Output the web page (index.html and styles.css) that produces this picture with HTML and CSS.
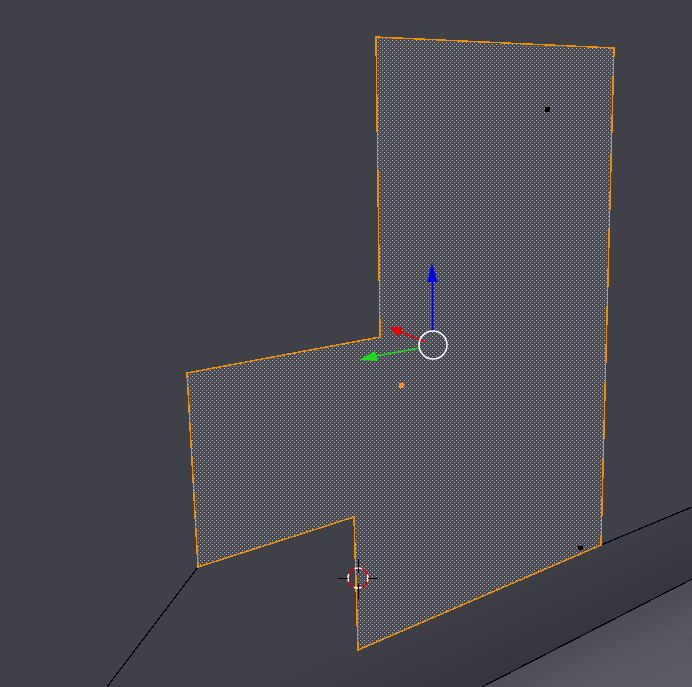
FILE: index.html
```html
<!DOCTYPE html>
<html lang="en">
<head>
<meta charset="utf-8">
<title>3D viewport</title>
<link rel="stylesheet" href="styles.css">
</head>
<body>
<svg class="viewport" viewBox="0 0 692 687" width="692" height="687" xmlns="http://www.w3.org/2000/svg" role="img" aria-label="3D viewport with a selected face">
  <defs>
    <pattern id="dots" x="0" y="0" width="4" height="4" patternUnits="userSpaceOnUse">
      <rect class="dot-bg" width="4" height="4"/>
      <rect class="dot" x="0" y="0" width="1" height="1"/>
      <rect class="dot" x="2" y="2" width="1" height="1"/>
    </pattern>
    <linearGradient id="floorShade" gradientUnits="userSpaceOnUse" x1="640" y1="600" x2="680" y2="687">
      <stop offset="0" class="floor-a"/>
      <stop offset="0.45" class="floor-b"/>
      <stop offset="1" class="floor-c"/>
    </linearGradient>
    <linearGradient id="wallShade" gradientUnits="userSpaceOnUse" x1="560" y1="540" x2="600" y2="625">
      <stop offset="0" class="wall-a"/>
      <stop offset="1" class="wall-b"/>
    </linearGradient>
  </defs>

  <rect class="bg" width="692" height="687"/>
  <polygon class="wall" points="198,567 354,517 358,650 601,545 692,507 692,579 482,687 107,687"/>
  <polygon class="floor" points="692,579 482,687 692,687"/>
  <polyline class="crease" points="643,608 692,640"/>

  <polyline class="black-edge" points="198,567 107,687"/>
  <polyline class="black-edge" points="601,545 692,507"/>
  <polyline class="black-edge" points="692,579 482,687"/>

  <polygon class="face" points="376,37 614,48 601,545 358,650 354,517 198,567 187,373 380,337"/>

  <rect class="vert" x="545" y="107" width="5" height="5"/>
  <rect class="vert" x="578" y="546" width="5" height="4"/>
  <rect class="origin" x="399" y="383" width="5" height="5"/>

  <g class="gizmo">
    <line class="axis-z" x1="432.500" y1="331" x2="432.500" y2="280"/>
    <polygon class="cone-z" points="432,263 434,270 437.500,282 427.500,282 430,270"/>
    <line class="axis-x" x1="425" y1="342" x2="401" y2="332"/>
    <polygon class="cone-x" points="390,327 402,327 402,332 397,336"/>
    <line class="axis-y" x1="420" y1="348" x2="376" y2="356"/>
    <polygon class="cone-y" points="359,360 375,351 378,361"/>
    <circle class="ring" cx="433" cy="345" r="14"/>
  </g>

  <g class="cursor">
    <circle class="cursor-red" cx="358" cy="578" r="10"/>
    <circle class="cursor-white" cx="358" cy="578" r="10"/>
    <path class="cursor-cross" d="M338 578.500H348M368 578.500H378M358.500 559V573M358.500 583V599"/>
  </g>
</svg>
</body>
</html>
```

FILE: styles.css
```css
html, body {
  margin: 0;
  padding: 0;
  background: #3f4048;
}

.viewport {
  display: block;
}

.bg { fill: #3f4048; }
.wall { fill: url(#wallShade); }
.wall-a { stop-color: #3f4048; }
.wall-b { stop-color: #35353d; }
.floor { fill: url(#floorShade); }
.floor-a { stop-color: #4a4a52; }
.floor-b { stop-color: #56565f; }
.floor-c { stop-color: #5c5c66; }
.crease { fill: none; stroke: #4a4a52; stroke-width: 1; stroke-dasharray: 2 2; }

.black-edge { fill: none; stroke: #000; stroke-width: 1.2; shape-rendering: crispEdges; }

.dot-bg { fill: #4b4b54; }
.dot { fill: #b0b0b8; }
.face {
  fill: url(#dots);
  stroke: #e8900c;
  stroke-width: 1.5;
  stroke-linejoin: miter;
  shape-rendering: crispEdges;
}

.vert { fill: #000; }
.origin { fill: #ff8a1c; }

.axis-z { stroke: #0000e6; stroke-width: 1.5; }
.cone-z { fill: #0000e6; }
.axis-x { stroke: #e60000; stroke-width: 1.5; }
.cone-x { fill: #e60000; }
.axis-y { stroke: #1fdc1f; stroke-width: 1.5; }
.cone-y { fill: #1fdc1f; }
.ring { fill: none; stroke: #fff; stroke-width: 1.5; }

.cursor-red { fill: none; stroke: #e00000; stroke-width: 1.5; }
.cursor-white { fill: none; stroke: #fff; stroke-width: 1.5; stroke-dasharray: 7.85 7.85; stroke-dashoffset: 3.9; }
.cursor-cross { fill: none; stroke: #000; stroke-width: 1; shape-rendering: crispEdges; }
```
